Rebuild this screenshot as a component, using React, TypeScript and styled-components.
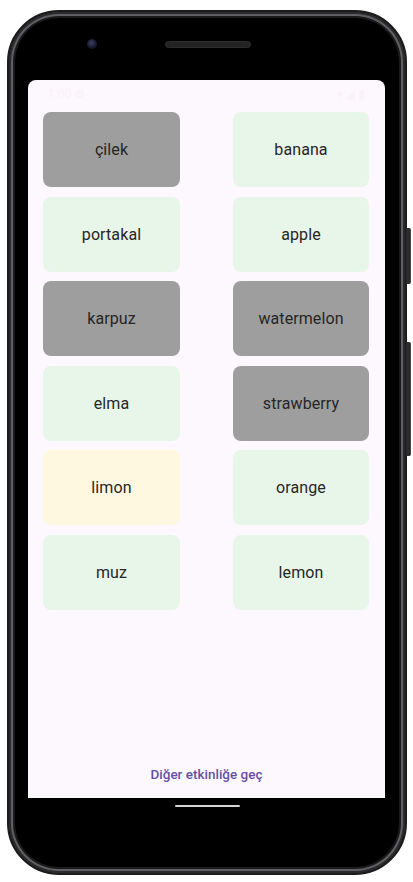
import styled, { createGlobalStyle } from "styled-components";

const GlobalStyle = createGlobalStyle`
  * { box-sizing: border-box; }
  body {
    margin: 0;
    background: #ffffff;
    font-family: Roboto, "Noto Sans", "Liberation Sans", sans-serif;
  }
`;

const Page = styled.div`
  width: 413px;
  height: 882px;
  padding: 10px 6px 7px 7px;
`;

const Phone = styled.div`
  position: relative;
  width: 400px;
  height: 865px;
  border-radius: 52px;
  background: #000;
  border: 2px solid #1c1c1c;
  box-shadow:
    inset 0 0 0 2px #2a2a2a,
    inset 0 0 0 4px #5f6063,
    inset 0 0 0 6px #1a1a1a;
  display: flex;
  flex-direction: column;
`;

const SideButton = styled.div<{ $top: number; $height: number }>`
  position: absolute;
  right: -6px;
  top: ${(p) => p.$top}px;
  width: 5px;
  height: ${(p) => p.$height}px;
  border-radius: 0 2px 2px 0;
  background: #2b2b2b;
  border-right: 1px solid #444;
`;

const TopBezel = styled.div`
  height: 68px;
  display: flex;
  align-items: center;
  padding: 0 0 4px 78px;
  gap: 68px;
`;

const Camera = styled.div`
  width: 10px;
  height: 10px;
  border-radius: 50%;
  background: radial-gradient(circle at 45% 40%, #3a3f66 0%, #15172a 60%, #0c0c10 100%);
`;

const Speaker = styled.div`
  width: 86px;
  height: 7px;
  border-radius: 4px;
  background: #232323;
  border: 1px solid #2e2e2e;
`;

const Screen = styled.div`
  margin: 0 20px 0 19px;
  height: 718px;
  background: #fdf8fd;
  border-radius: 8px 8px 0 0;
  display: flex;
  flex-direction: column;
`;

const StatusBar = styled.div`
  height: 28px;
  padding: 0 20px;
  display: flex;
  align-items: center;
  justify-content: space-between;
  font-size: 12px;
  color: #f9f3f9;
`;

const Grid = styled.div`
  margin-top: 4px;
  padding: 0 16px 0 15px;
  display: grid;
  grid-template-columns: 137px 136px;
  justify-content: space-between;
  row-gap: 9.5px;
`;

const tones = {
  grey: "#9e9e9e",
  green: "#e8f5e9",
  yellow: "#fff8e1",
};

type Tone = keyof typeof tones;

const Card = styled.div<{ $tone: Tone }>`
  height: 75px;
  border-radius: 8px;
  background: ${(p) => tones[p.$tone]};
  display: flex;
  align-items: center;
  justify-content: center;
  font-size: 16px;
  color: #262626;
  letter-spacing: 0.1px;
`;

const Spacer = styled.div`
  flex: 1;
`;

const NextLink = styled.div`
  text-align: center;
  font-size: 13.5px;
  font-weight: 500;
  color: #6750a4;
  padding-bottom: 16px;
`;

const BottomBezel = styled.div`
  display: flex;
  justify-content: center;
  padding-top: 7px;
`;

const HomeBar = styled.div`
  width: 65px;
  height: 2px;
  border-radius: 1px;
  background: #d6d6d6;
`;

const cards: { label: string; tone: Tone }[] = [
  { label: "çilek", tone: "grey" },
  { label: "banana", tone: "green" },
  { label: "portakal", tone: "green" },
  { label: "apple", tone: "green" },
  { label: "karpuz", tone: "grey" },
  { label: "watermelon", tone: "grey" },
  { label: "elma", tone: "green" },
  { label: "strawberry", tone: "grey" },
  { label: "limon", tone: "yellow" },
  { label: "orange", tone: "green" },
  { label: "muz", tone: "green" },
  { label: "lemon", tone: "green" },
];

export default function App() {
  return (
    <Page>
      <GlobalStyle />
      <Phone>
        <SideButton $top={216} $height={56} />
        <SideButton $top={330} $height={114} />
        <TopBezel>
          <Camera />
          <Speaker />
        </TopBezel>
        <Screen>
          <StatusBar>
            <span>1:00 ⚙</span>
            <span>▾ ◢ ▮</span>
          </StatusBar>
          <Grid>
            {cards.map((c) => (
              <Card key={c.label} $tone={c.tone}>
                {c.label}
              </Card>
            ))}
          </Grid>
          <Spacer />
          <NextLink>Diğer etkinliğe geç</NextLink>
        </Screen>
        <BottomBezel>
          <HomeBar />
        </BottomBezel>
      </Phone>
    </Page>
  );
}
